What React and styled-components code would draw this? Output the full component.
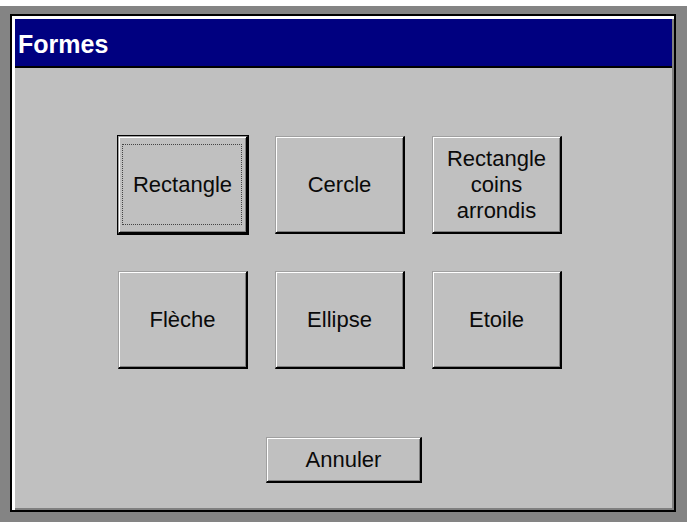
import React from 'react';
import styled, { createGlobalStyle } from 'styled-components';

const GlobalStyle = createGlobalStyle`
  html, body {
    margin: 0;
    padding: 0;
    background: #ffffff;
  }
  body {
    font-family: "Liberation Sans", Arial, sans-serif;
  }
`;

const Screen = styled.div`
  width: 687px;
  height: 526px;
  padding-top: 6px;
  box-sizing: border-box;
  background: #ffffff;
`;

const Desktop = styled.div`
  height: 516px;
  background: #848484;
  padding: 8px 0 0 10px;
  box-sizing: border-box;
`;

const Window = styled.div`
  width: 666px;
  height: 498px;
  box-sizing: border-box;
  border: 2px solid #000;
  padding: 3px 2px 2px 3px;
  box-shadow: inset 3px 3px #ffffff, inset -2px -2px #808080;
  background: #c0c0c0;
  display: flex;
  flex-direction: column;
`;

const TitleBar = styled.div`
  height: 44px;
  padding: 3px 0 0 3px;
  background: #000080;
  border-bottom: 2px solid #000;
  color: #ffffff;
  font-weight: bold;
  font-size: 25px;
  display: flex;
  align-items: center;
`;

const Body = styled.div`
  flex: 1;
  display: flex;
  flex-direction: column;
  padding: 68px 0 0 103px;
`;

const Grid = styled.div`
  display: grid;
  grid-template-columns: repeat(3, 130px);
  grid-auto-rows: 98px;
  column-gap: 27px;
  row-gap: 37px;
`;

const Button = styled.button`
  position: relative;
  box-sizing: border-box;
  width: ${p => p.$wide ? '156px' : '130px'};
  height: ${p => p.$wide ? '46px' : '98px'};
  margin: 0;
  padding: 0 2px;
  background: #c0c0c0;
  border-style: solid;
  border-width: 1px 2px 2px 1px;
  border-color: #a0a0a0 #000 #000 #a0a0a0;
  box-shadow: inset 1px 1px #ffffff, inset -1px -1px #808080;
  outline: ${p => p.$default ? '1px solid #000' : 'none'};
  font-family: "Liberation Sans", Arial, sans-serif;
  font-size: 22px;
  line-height: 26px;
  color: #0a0a0a;
  text-align: center;

  &::after {
    content: '';
    display: ${p => p.$default ? 'block' : 'none'};
    position: absolute;
    top: 7px;
    left: 3px;
    right: 4px;
    bottom: 7px;
    border: 1px dotted #444;
  }
`;

const Footer = styled.div`
  display: flex;
  padding-left: 148px;
  margin-top: 68px;
`;

const shapes = [
  { label: 'Rectangle', isDefault: true },
  { label: 'Cercle' },
  { label: <>Rectangle<br />coins<br />arrondis</> },
  { label: 'Flèche' },
  { label: 'Ellipse' },
  { label: 'Etoile' },
];

const App = () => {
  return (
    <>
      <GlobalStyle />
      <Screen>
        <Desktop>
          <Window>
            <TitleBar>Formes</TitleBar>
            <Body>
              <Grid>
                {shapes.map((s, i) => (
                  <Button key={i} $default={s.isDefault}>{s.label}</Button>
                ))}
              </Grid>
              <Footer>
                <Button $wide>Annuler</Button>
              </Footer>
            </Body>
          </Window>
        </Desktop>
      </Screen>
    </>
  );
};

export default App;
